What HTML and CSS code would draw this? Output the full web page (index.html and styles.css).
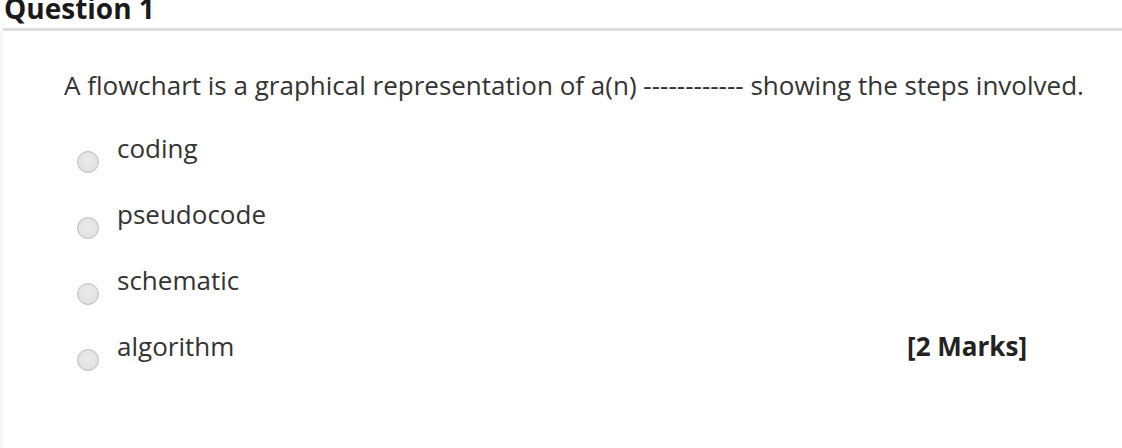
FILE: index.html
```html
<!DOCTYPE html>
<html>
<head>
<meta charset="utf-8">
<link rel="stylesheet" href="styles.css">
</head>
<body>
<div class="page">
  <h2 class="q-title">Question 1</h2>
  <div class="q-body">
    <p class="q-text">A flowchart is a graphical representation of a(n) ------------ showing the steps involved.</p>
    <ul class="options">
      <li class="option"><span class="radio"></span><span class="label">coding</span></li>
      <li class="option"><span class="radio"></span><span class="label">pseudocode</span></li>
      <li class="option"><span class="radio"></span><span class="label">schematic</span></li>
      <li class="option"><span class="radio"></span><span class="label">algorithm</span><span class="marks">[2 Marks]</span></li>
    </ul>
  </div>
</div>
</body>
</html>
```
FILE: styles.css
```css
html, body {
  margin: 0;
  padding: 0;
  background: #ffffff;
}
body {
  font-family: "Open Sans", "Liberation Sans", sans-serif;
  color: #333333;
  width: 1122px;
  height: 448px;
  overflow: hidden;
}
.page {
  display: flex;
  flex-direction: column;
  height: 448px;
}
.q-title {
  margin: 0 0 0 3px;
  padding: 0 0 11px 1px;
  font-size: 28px;
  font-weight: 700;
  line-height: 17px;
  color: #1a1a1a;
  border-bottom: 3px solid #dcdcdc;
}
.q-body {
  flex: 1;
  border-left: 3px solid #f6f6f6;
  padding-left: 61px;
}
.q-text {
  margin: 37px 0 0 0;
  font-size: 26px;
  line-height: 34px;
}
.options {
  list-style: none;
  margin: 29px 0 0 0;
  padding: 0 0 0 13px;
  width: 950px;
}
.option {
  display: flex;
  align-items: flex-start;
  height: 66px;
  font-size: 26px;
  line-height: 34px;
}
.radio {
  width: 22px;
  height: 22px;
  margin-top: 20px;
  border-radius: 50%;
  border: 1px solid #bdbdbd;
  background: radial-gradient(circle at 50% 45%, #ebebeb 0%, #e2e2e2 65%, #d0d0d0 100%);
  box-sizing: border-box;
  flex: none;
}
.label {
  margin-left: 18px;
}
.marks {
  margin-left: auto;
  font-weight: 700;
  color: #222222;
}
```
